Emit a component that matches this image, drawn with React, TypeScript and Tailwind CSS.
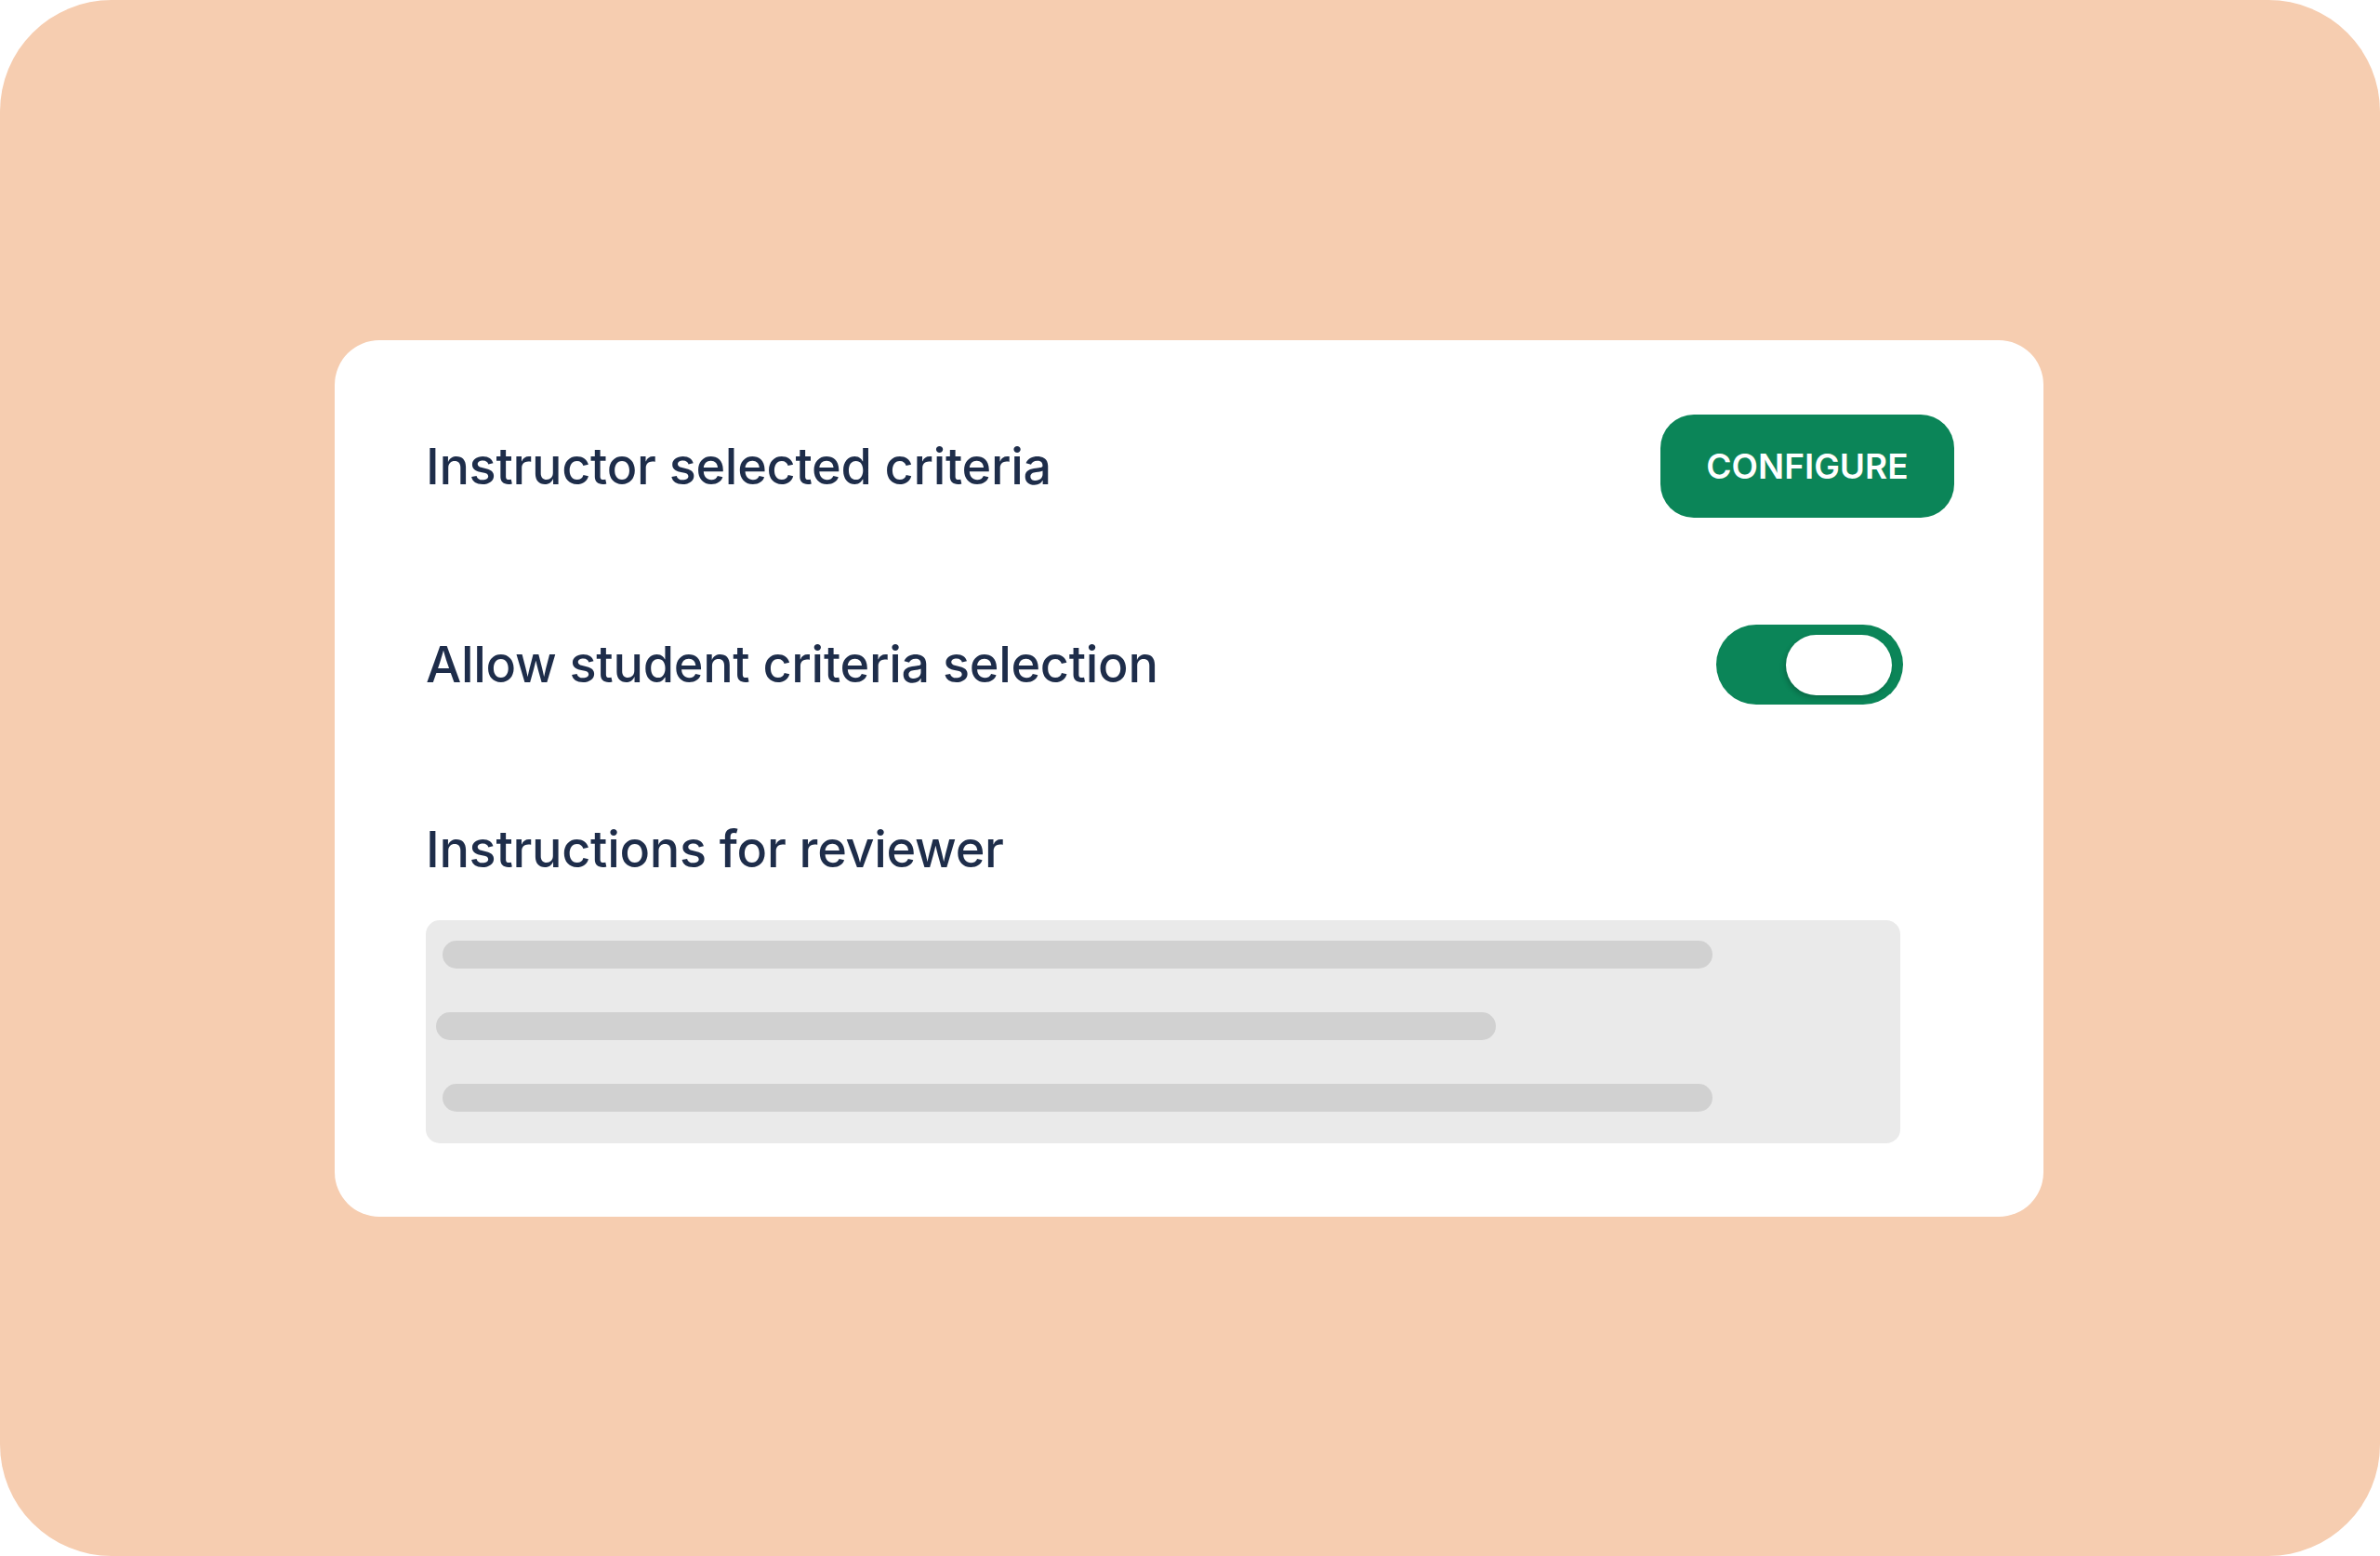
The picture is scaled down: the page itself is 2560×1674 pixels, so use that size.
import { useState } from 'react';

const font = { fontFamily: 'Inter, "Noto Sans", sans-serif' };

function Toggle({ on, onChange }: { on: boolean; onChange: () => void }) {
  return (
    <button
      type="button"
      onClick={onChange}
      className={`flex h-[86px] w-[201px] items-center rounded-full px-[12px] transition-colors ${
        on ? 'justify-end bg-[#0b8558]' : 'justify-start bg-[#cfcfcf]'
      }`}
    >
      <span className="block h-[65px] w-[114px] rounded-full bg-white shadow-[-2px_3px_5px_rgba(0,0,0,0.18)]" />
    </button>
  );
}

export default function App() {
  const [studentSelect, setStudentSelect] = useState(true);

  return (
    <div className="h-[1674px] w-[2560px] bg-white" style={font}>
      <div className="h-full w-full rounded-[120px] bg-[#f6cdb0] pl-[360px] pt-[366px]">
        <div className="flex h-[943px] w-[1838px] flex-col rounded-[48px] bg-white pb-[79px] pl-[98px] pr-[96px] pt-[80px]">
          {/* Instructor criteria */}
          <div className="flex h-[111px] items-center justify-between">
            <h2 className="text-[54px] font-medium leading-none tracking-[-0.3px] text-[#1e2d4a]">
              Instructor selected criteria
            </h2>
            <button className="flex h-[111px] w-[316px] items-center justify-center rounded-[36px] bg-[#0b8558] text-[37px] font-semibold text-white">
              CONFIGURE
            </button>
          </div>

          {/* Student selection */}
          <div className="mt-[115px] flex h-[86px] items-center justify-between pr-[55px]">
            <h2 className="text-[54px] font-medium leading-none tracking-[-0.3px] text-[#1e2d4a]">
              Allow student criteria selection
            </h2>
            <Toggle on={studentSelect} onChange={() => setStudentSelect(v => !v)} />
          </div>

          {/* Instructions */}
          <div className="mt-[113px] flex h-[86px] items-center">
            <h2 className="text-[54px] font-medium leading-none tracking-[-0.3px] text-[#1e2d4a]">
              Instructions for reviewer
            </h2>
          </div>
          <div className="mt-[33px] flex h-[240px] w-[1586px] flex-col rounded-[15px] bg-[#eaeaea] pt-[22px]">
            <div className="ml-[18px] h-[30px] w-[1366px] rounded-full bg-[#d1d1d1]" />
            <div className="ml-[11px] mt-[47px] h-[30px] w-[1140px] rounded-full bg-[#d1d1d1]" />
            <div className="ml-[18px] mt-[47px] h-[30px] w-[1366px] rounded-full bg-[#d1d1d1]" />
          </div>
        </div>
      </div>
    </div>
  );
}
